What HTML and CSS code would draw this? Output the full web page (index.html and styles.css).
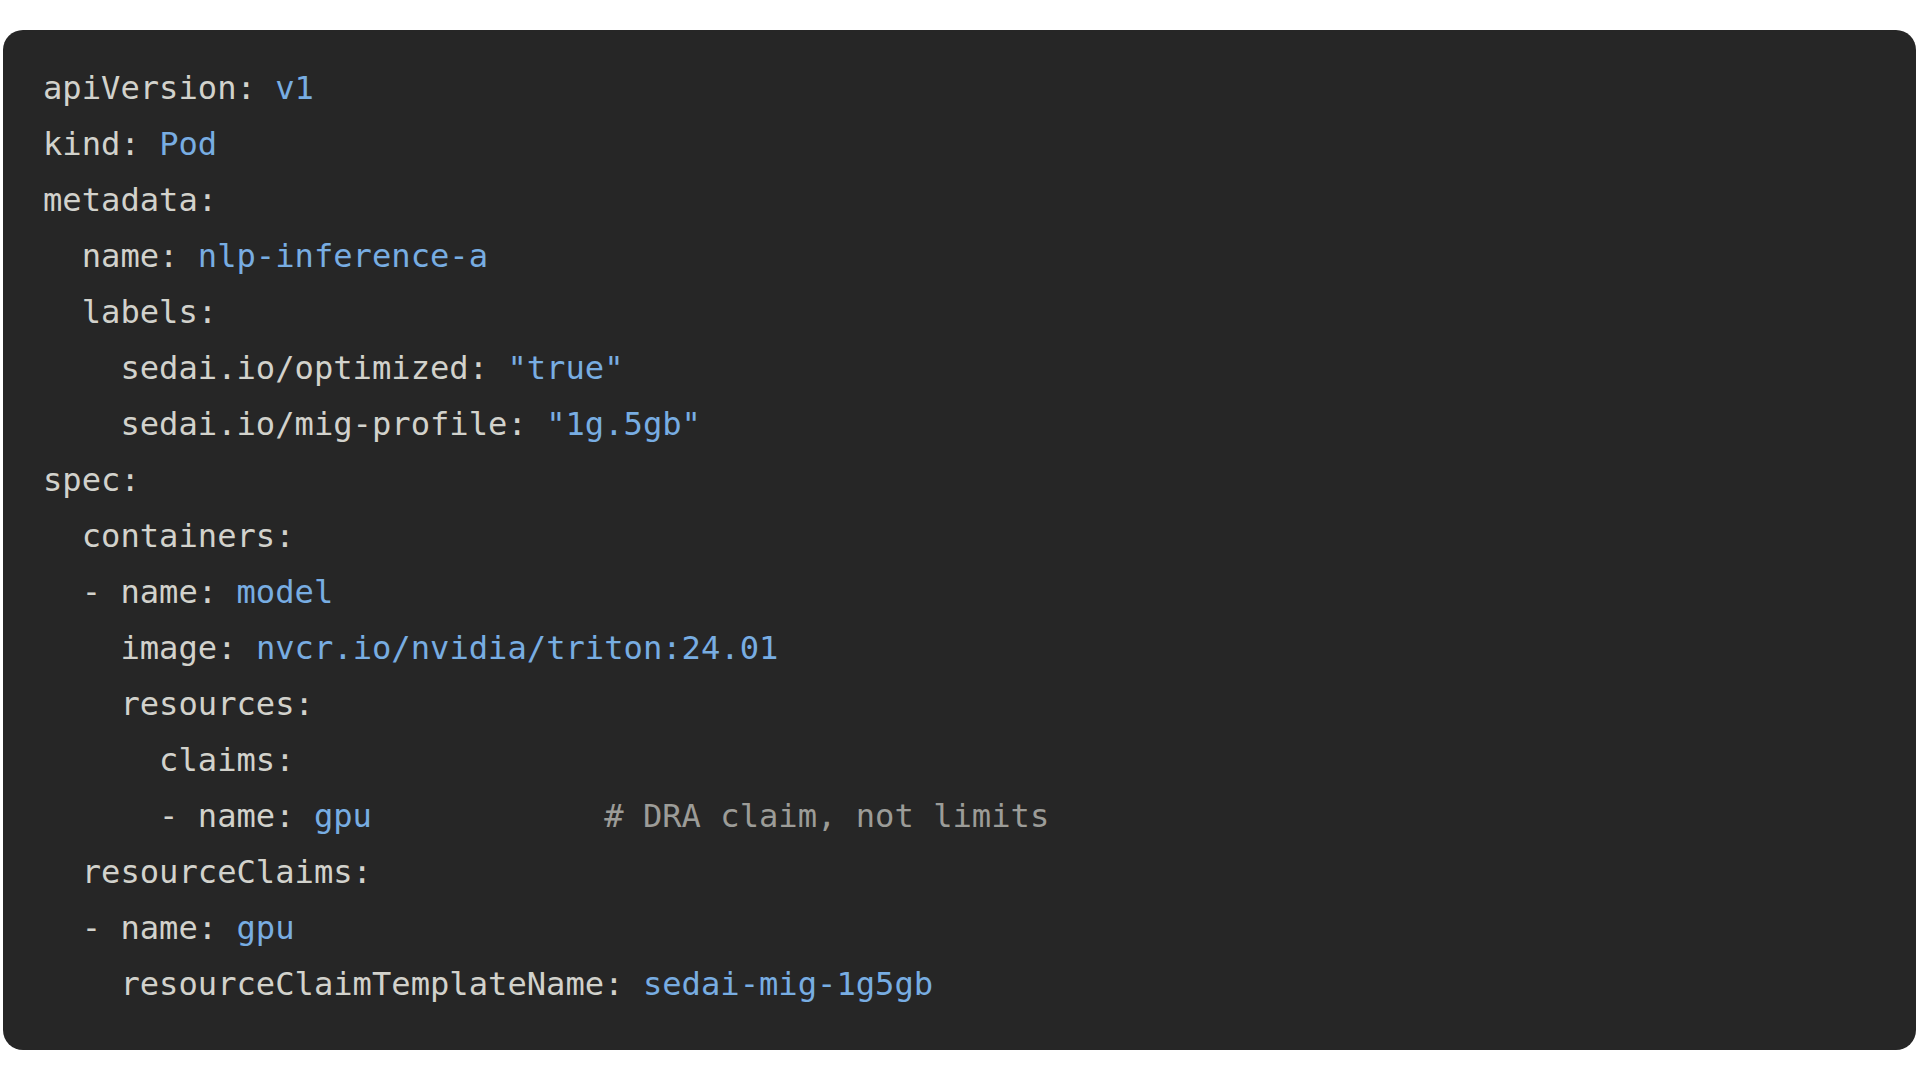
FILE: index.html
```html
<!DOCTYPE html>
<html>
<head>
<meta charset="utf-8">
<link rel="stylesheet" href="styles.css">
</head>
<body>
<div class="page">
<div class="card">
<pre class="code"><span class="k">apiVersion:</span> <span class="v">v1</span>
<span class="k">kind:</span> <span class="v">Pod</span>
<span class="k">metadata:</span>
<span class="k">  name:</span> <span class="v">nlp-inference-a</span>
<span class="k">  labels:</span>
<span class="k">    sedai.io/optimized:</span> <span class="v">"true"</span>
<span class="k">    sedai.io/mig-profile:</span> <span class="v">"1g.5gb"</span>
<span class="k">spec:</span>
<span class="k">  containers:</span>
<span class="k">  - name:</span> <span class="v">model</span>
<span class="k">    image:</span> <span class="v">nvcr.io/nvidia/triton:24.01</span>
<span class="k">    resources:</span>
<span class="k">      claims:</span>
<span class="k">      - name:</span> <span class="v">gpu</span>            <span class="c"># DRA claim, not limits</span>
<span class="k">  resourceClaims:</span>
<span class="k">  - name:</span> <span class="v">gpu</span>
<span class="k">    resourceClaimTemplateName:</span> <span class="v">sedai-mig-1g5gb</span></pre>
</div>
</div>
</body>
</html>
```

FILE: styles.css
```css
html, body {
  margin: 0;
  padding: 0;
  background: #ffffff;
}
.page {
  padding: 30px 4px 29px 3px;
}
.card {
  background: #262626;
  border-radius: 20px;
  padding: 30px 40px 38px 40px;
}
.code {
  margin: 0;
  font-family: "DejaVu Sans Mono", "Liberation Mono", monospace;
  font-size: 32.15px;
  line-height: 56px;
  color: #d2d2cc;
}
.k {
  color: #d2d2cc;
}
.v {
  color: #78ade2;
}
.c {
  color: #9c9c98;
}
```
